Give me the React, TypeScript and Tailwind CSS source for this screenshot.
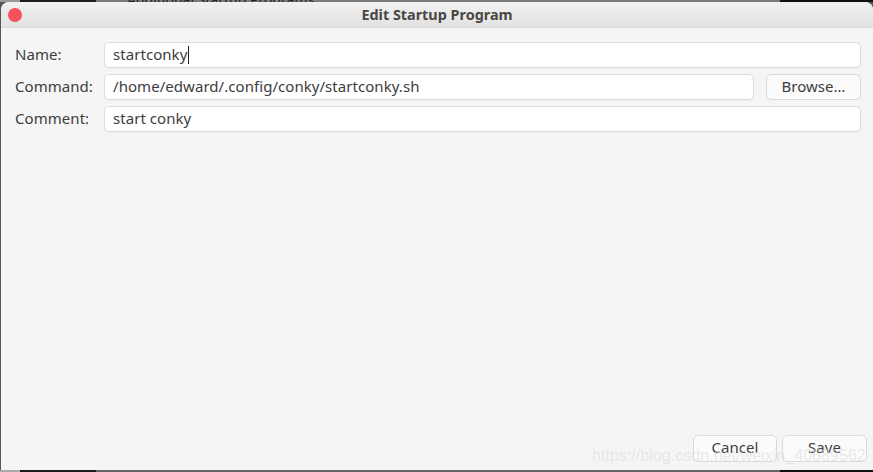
export default function App() {
  const font = { fontFamily: '"Noto Sans", sans-serif' };
  const textCls = "text-[15px] tracking-[0.05px] text-[#3d3d3d]";
  const inputCls =
    "h-[26px] min-w-0 flex-1 rounded-[5px] border border-[#dcdcdc] bg-white pl-2 pb-[2px] flex items-center shadow-[0_1px_0_#eee] " + textCls;
  const btnCls =
    "rounded-[5px] border border-[#dadada] bg-[#fbfbfb] pb-[2px] flex items-center justify-center " + textCls;
  return (
    <div className="relative flex h-[472px] w-[873px] flex-col overflow-hidden bg-[#555]" style={font}>
      <div className="relative flex h-[2px] shrink-0 overflow-hidden bg-[#6e6e6e]">
        <div className="h-full w-[20px] bg-[#9a9a9a]" />
        <div className="h-full w-[76px] bg-[#1c1c1c]" />
        <div className="flex-1 bg-[#7a7a7a]" />
        <div className="h-full w-[93px] bg-[#111]" />
        <span className="absolute left-[127px] top-[-11px] text-[14px] text-[#222]">Additional Startup Programs</span>
      </div>
      <div className="ml-px flex min-h-0 flex-1 flex-col rounded-t-[8px] bg-[#f5f5f5]">
        <div className="relative flex h-[26px] shrink-0 items-center justify-center rounded-t-[8px] border-b border-[#dcdcdc] bg-gradient-to-b from-[#f1f1f1] to-[#e2e2e2]">
          <span className="text-[14.4px] font-bold text-[#4a4642]">Edit Startup Program</span>
          <div className="absolute left-[7px] top-[6px] h-[14px] w-[14px] rounded-full bg-[#f4505e]" />
        </div>
        <div className="flex min-h-0 flex-1 flex-col justify-between pb-2 pl-[14px] pr-[6px] pt-[14px]">
          <div className="flex flex-col gap-[6px] pr-[6px]">
            <div className="flex items-center">
              <span className={"w-[89px] pb-[2px] " + textCls}>Name:</span>
              <div className={inputCls}>
                startconky
                <span className="ml-px mt-[2px] h-[18px] w-px bg-[#222]" />
              </div>
            </div>
            <div className="flex items-center">
              <span className={"w-[89px] pb-[2px] " + textCls}>Command:</span>
              <div className={inputCls}>/home/edward/.config/conky/startconky.sh</div>
              <div className={btnCls + " ml-3 h-[26px] w-[95px]"}>Browse…</div>
            </div>
            <div className="flex items-center">
              <span className={"w-[89px] pb-[2px] " + textCls}>Comment:</span>
              <div className={inputCls}>start conky</div>
            </div>
          </div>
          <div className="flex justify-end gap-[5px]">
            <div className={btnCls + " h-[27px] w-[84px]"}>Cancel</div>
            <div className={btnCls + " h-[27px] w-[85px]"}>Save</div>
          </div>
        </div>
      </div>
      <div className="flex h-[2px] shrink-0">
        <div className="w-[20px] bg-[#aaa]" />
        <div className="w-[76px] bg-[#1c1c1c]" />
        <div className="flex-1 bg-[#666]" />
        <div className="w-[93px] bg-[#111]" />
      </div>
      <span
        className="absolute left-[592px] top-[443px] text-[16.1px] text-[#dcdcdc]/60"
        style={{ fontFamily: '"Liberation Sans", sans-serif' }}
      >
        https://blog.csdn.net/weixin_40689562
      </span>
    </div>
  );
}
